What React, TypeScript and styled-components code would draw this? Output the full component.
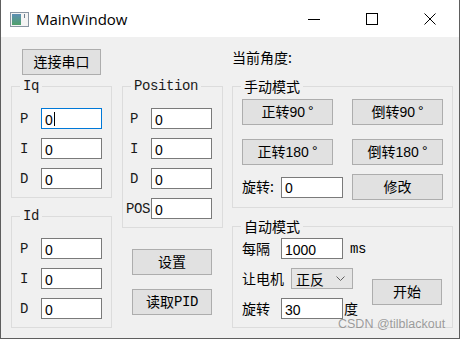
import styled, { createGlobalStyle } from "styled-components";

const SANS = `"Liberation Sans", "Noto Sans CJK SC", sans-serif`;
const CJK = `"Noto Sans CJK SC", "Liberation Sans", sans-serif`;
const MONO = `"Liberation Mono", "Noto Sans CJK SC", monospace`;

const GlobalStyle = createGlobalStyle`
  html, body {
    margin: 0;
    padding: 0;
    background: #ffffff;
  }
  body {
    font-family: ${CJK};
    color: #000;
  }
`;

export default function App() {
  return (
    <>
      <GlobalStyle />
      <Window>
        <TitleBar>
          <AppIcon width="19" height="15" viewBox="0 0 19 15">
            <defs>
              <linearGradient id="ic" x1="0" y1="0" x2="0" y2="1">
                <stop offset="0" stopColor="#5d8fb5" />
                <stop offset="1" stopColor="#4fa06a" />
              </linearGradient>
            </defs>
            <rect x="0.5" y="0.5" width="18" height="14" fill="#f4f4f4" stroke="#8a96a3" />
            <rect x="2" y="2" width="9" height="11" fill="url(#ic)" />
            <rect x="14" y="2" width="1" height="4" fill="#6f7f8f" />
          </AppIcon>
          <Title>MainWindow</Title>
          <Caption>
            <CaptionBtn>
              <svg width="12" height="12" viewBox="0 0 12 12">
                <path d="M0 6.5 H12" stroke="#000" strokeWidth="1" />
              </svg>
            </CaptionBtn>
            <CaptionBtn>
              <svg width="12" height="12" viewBox="0 0 12 12">
                <rect x="0.5" y="0.5" width="11" height="11" fill="none" stroke="#000" />
              </svg>
            </CaptionBtn>
            <CaptionBtn>
              <svg width="12" height="12" viewBox="0 0 12 12">
                <path d="M0.5 0.5 L11.5 11.5 M11.5 0.5 L0.5 11.5" stroke="#000" strokeWidth="1" />
              </svg>
            </CaptionBtn>
          </Caption>
        </TitleBar>

        <Client>
          <Column $w={101}>
            <PushButton $w={79} style={{ margin: "12px 0 0 11px" }}>连接串口</PushButton>
            <Group $h={120} style={{ marginTop: 3 }}>
              <GroupTitle $mono>Iq</GroupTitle>
              <PidBody $left={8}>
                <FieldRow>
                  <MonoLabel $w={21}>P</MonoLabel>
                  <LineEdit $w={61} $focused>
                    0<Caret />
                  </LineEdit>
                </FieldRow>
                <FieldRow>
                  <MonoLabel $w={21}>I</MonoLabel>
                  <LineEdit $w={61}>0</LineEdit>
                </FieldRow>
                <FieldRow>
                  <MonoLabel $w={21}>D</MonoLabel>
                  <LineEdit $w={61}>0</LineEdit>
                </FieldRow>
              </PidBody>
            </Group>
            <Group $h={120} style={{ marginTop: 10 }}>
              <GroupTitle $mono>Id</GroupTitle>
              <PidBody $left={8}>
                <FieldRow>
                  <MonoLabel $w={21}>P</MonoLabel>
                  <LineEdit $w={61}>0</LineEdit>
                </FieldRow>
                <FieldRow>
                  <MonoLabel $w={21}>I</MonoLabel>
                  <LineEdit $w={61}>0</LineEdit>
                </FieldRow>
                <FieldRow>
                  <MonoLabel $w={21}>D</MonoLabel>
                  <LineEdit $w={61}>0</LineEdit>
                </FieldRow>
              </PidBody>
            </Group>
          </Column>

          <Column $w={101} style={{ marginLeft: 10 }}>
            <Group $h={150} style={{ marginTop: 41 }}>
              <GroupTitle $mono>Position</GroupTitle>
              <PidBody $left={7}>
                <FieldRow>
                  <MonoLabel $w={21}>P</MonoLabel>
                  <LineEdit $w={61}>0</LineEdit>
                </FieldRow>
                <FieldRow>
                  <MonoLabel $w={21}>I</MonoLabel>
                  <LineEdit $w={61}>0</LineEdit>
                </FieldRow>
                <FieldRow>
                  <MonoLabel $w={21}>D</MonoLabel>
                  <LineEdit $w={61}>0</LineEdit>
                </FieldRow>
                <FieldRow>
                  <MonoLabel $w={25} style={{ marginLeft: -4 }}>POS</MonoLabel>
                  <LineEdit $w={61}>0</LineEdit>
                </FieldRow>
              </PidBody>
            </Group>
            <PushButton $w={80} style={{ margin: "21px 0 0 10px" }}>设置</PushButton>
            <PushButton $w={80} style={{ margin: "14px 0 0 10px" }}>
              读取<Mono>PID</Mono>
            </PushButton>
          </Column>

          <Column $w={221} style={{ marginLeft: 9 }}>
            <AngleText>当前角度:</AngleText>
            <Group $h={130} style={{ marginTop: 11 }}>
              <GroupTitle>手动模式</GroupTitle>
              <ManualBody>
                <BtnRow>
                  <PushButton $w={91}>正转90<Deg>°</Deg></PushButton>
                  <PushButton $w={91}>倒转90<Deg>°</Deg></PushButton>
                </BtnRow>
                <BtnRow>
                  <PushButton $w={91}>正转180<Deg>°</Deg></PushButton>
                  <PushButton $w={91}>倒转180<Deg>°</Deg></PushButton>
                </BtnRow>
                <BtnRow style={{ marginTop: -5 }}>
                  <FieldRow>
                    <Label $w={39}>旋转:</Label>
                    <LineEdit $w={62}>0</LineEdit>
                  </FieldRow>
                  <PushButton $w={91}>修改</PushButton>
                </BtnRow>
              </ManualBody>
            </Group>
            <Group $h={110} style={{ marginTop: 10 }}>
              <GroupTitle>自动模式</GroupTitle>
              <AutoBody>
                <AutoFields>
                  <FieldRow>
                    <Label $w={39}>每隔</Label>
                    <LineEdit $w={62}>1000</LineEdit>
                    <Mono style={{ marginLeft: 7 }}>ms</Mono>
                  </FieldRow>
                  <FieldRow>
                    <Label $w={49}>让电机</Label>
                    <Combo>
                      正反
                      <svg width="9" height="5" viewBox="0 0 9 5">
                        <path d="M0.5 0.5 L4.5 4.5 L8.5 0.5" fill="none" stroke="#606060" />
                      </svg>
                    </Combo>
                  </FieldRow>
                  <FieldRow>
                    <Label $w={39}>旋转</Label>
                    <LineEdit $w={62}>30</LineEdit>
                    <Label $w={16} style={{ marginLeft: 1 }}>度</Label>
                  </FieldRow>
                </AutoFields>
                <PushButton $w={70} style={{ marginTop: 41 }}>开始</PushButton>
              </AutoBody>
            </Group>
          </Column>

          <Watermark>CSDN @tilblackout</Watermark>
        </Client>
      </Window>
    </>
  );
}

const Window = styled.div`
  width: 460px;
  height: 339px;
  box-sizing: border-box;
  border: 1px solid #5e5e5e;
  border-top: none;
  display: flex;
  flex-direction: column;
  background: #f0f0f0;
`;

const TitleBar = styled.div`
  height: 37px;
  flex: none;
  display: flex;
  align-items: center;
  background: #ffffff;
`;

const AppIcon = styled.svg`
  margin: 1px 0 0 9px;
`;

const Title = styled.span`
  margin-left: 7px;
  font-family: "Open Sans", "Liberation Sans", sans-serif;
  font-size: 15px;
  margin-top: 1px;
`;

const Caption = styled.div`
  margin-left: auto;
  display: flex;
  height: 100%;
`;

const CaptionBtn = styled.div`
  width: 58px;
  display: flex;
  align-items: center;
  justify-content: center;
  svg {
    margin-top: 1px;
  }
`;

const Client = styled.div`
  flex: 1;
  position: relative;
  display: flex;
  align-items: flex-start;
  padding-left: 10px;
  background: #f0f0f0;
`;

const Column = styled.div<{ $w: number }>`
  width: ${(p) => p.$w}px;
  display: flex;
  flex-direction: column;
  align-items: flex-start;
`;

const PushButton = styled.div<{ $w: number }>`
  box-sizing: border-box;
  width: ${(p) => p.$w}px;
  height: 26px;
  flex: none;
  display: flex;
  align-items: center;
  justify-content: center;
  background: #e1e1e1;
  border: 1px solid #adadad;
  font-family: ${SANS};
  font-size: 14px;
  line-height: 1;
`;

const Deg = styled.span`
  margin-left: 3px;
  position: relative;
  top: -1px;
`;

const Group = styled.fieldset<{ $h: number }>`
  box-sizing: border-box;
  width: 100%;
  height: ${(p) => p.$h}px;
  margin: 0;
  padding: 0;
  min-width: 0;
  border: 1px solid #dcdcdc;
`;

const GroupTitle = styled.legend<{ $mono?: boolean }>`
  margin-left: 8px;
  padding: 0 3px;
  line-height: 16px;
  font-family: ${(p) => (p.$mono ? MONO : CJK)};
  font-size: 14px;
  letter-spacing: ${(p) => (p.$mono ? "-0.4px" : "0")};
  color: ${(p) => (p.$mono ? "#1a1a1a" : "#000")};
`;

const PidBody = styled.div<{ $left: number }>`
  display: flex;
  flex-direction: column;
  gap: 9px;
  padding: 14px 0 0 ${(p) => p.$left}px;
`;

const FieldRow = styled.div`
  display: flex;
  align-items: center;
  height: 21px;
`;

const MonoLabel = styled.span<{ $w: number }>`
  width: ${(p) => p.$w}px;
  flex: none;
  font-family: ${MONO};
  font-size: 14px;
  letter-spacing: -0.4px;
  color: #1a1a1a;
`;

const Mono = styled.span`
  font-family: ${MONO};
  font-size: 14px;
  letter-spacing: -0.4px;
`;

const Label = styled.span<{ $w: number }>`
  width: ${(p) => p.$w}px;
  flex: none;
  font-family: ${CJK};
  font-size: 14px;
  line-height: 1;
  margin-top: -2px;
`;

const LineEdit = styled.div<{ $w: number; $focused?: boolean }>`
  box-sizing: border-box;
  width: ${(p) => p.$w}px;
  height: 21px;
  flex: none;
  display: flex;
  align-items: center;
  padding: 2px 0 0 3px;
  background: #ffffff;
  border: 1px solid ${(p) => (p.$focused ? "#0078d7" : "#7a7a7a")};
  font-family: ${SANS};
  font-size: 14px;
`;

const Caret = styled.span`
  width: 1px;
  height: 14px;
  margin-left: 1px;
  margin-top: -2px;
  background: #000;
`;

const AngleText = styled.div`
  margin-top: 10px;
  line-height: 20px;
  font-size: 14px;
`;

const ManualBody = styled.div`
  display: flex;
  flex-direction: column;
  gap: 14px;
  padding: 5px 0 0 9px;
`;

const BtnRow = styled.div`
  display: flex;
  align-items: center;
  justify-content: space-between;
  width: 201px;
`;

const AutoBody = styled.div`
  display: flex;
  align-items: flex-start;
  padding: 4px 0 0 9px;
`;

const AutoFields = styled.div`
  width: 130px;
  display: flex;
  flex-direction: column;
  gap: 9px;
`;

const Combo = styled.div`
  box-sizing: border-box;
  width: 62px;
  height: 21px;
  display: flex;
  align-items: center;
  justify-content: space-between;
  padding: 0 7px 0 4px;
  background: #e5e5e5;
  border: 1px solid #adadad;
  font-size: 14px;
  line-height: 1;
`;

const Watermark = styled.div`
  position: absolute;
  left: 337px;
  top: 280px;
  font-family: "Liberation Sans", sans-serif;
  font-size: 12.5px;
  line-height: 14px;
  color: rgba(140, 140, 140, 0.85);
`;
